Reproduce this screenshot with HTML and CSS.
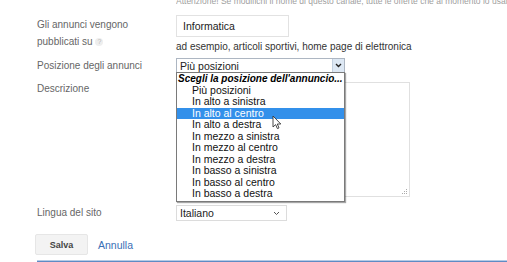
FILE: index.html
```html
<!DOCTYPE html>
<html lang="it">
<head>
    <meta charset="UTF-8">
    <title>Impostazioni canale</title>
    <link rel="stylesheet" href="styles.css">
</head>
<body>
    <div class="notice">Attenzione! Se modifichi il nome di questo canale, tutte le offerte che al momento lo usano come canale verranno aggiornate.</div>

    <!-- argomento -->
    <div class="row row-topic">
        <div class="label">Gli annunci vengono<br>pubblicati su <span class="help">?</span></div>
        <div class="field">
            <div class="text-input">Informatica</div>
            <div class="hint">ad esempio, articoli sportivi, home page di elettronica</div>
        </div>
    </div>

    <!-- posizione -->
    <div class="row row-position">
        <div class="label">Posizione degli annunci</div>
        <div class="field">
            <div class="select select-wide">
                <span>Più posizioni</span>
                <span class="arrow-box">
                    <svg width="7" height="5" viewBox="0 0 7 5"><path d="M1 1 L3.5 3.5 L6 1" fill="none" stroke="#222" stroke-width="1.4"/></svg>
                </span>
            </div>
            <ul class="dropdown">
                <li class="group">Scegli la posizione dell'annuncio...</li>
                <li>Più posizioni</li>
                <li>In alto a sinistra</li>
                <li class="active">In alto al centro</li>
                <li>In alto a destra</li>
                <li>In mezzo a sinistra</li>
                <li>In mezzo al centro</li>
                <li>In mezzo a destra</li>
                <li>In basso a sinistra</li>
                <li>In basso al centro</li>
                <li>In basso a destra</li>
            </ul>
            <svg class="cursor" width="10" height="15" viewBox="0 0 10 15">
                <path d="M1 1 L1 12 L3.6 9.6 L5.4 13.6 L7 12.9 L5.3 9 L8.8 9 Z" fill="#fff" stroke="#333" stroke-width="0.9" stroke-linejoin="round"/>
            </svg>
        </div>
    </div>

    <!-- descrizione -->
    <div class="row row-desc">
        <div class="label">Descrizione</div>
        <div class="field">
            <div class="textarea">
                <svg class="grip" width="7" height="7" viewBox="0 0 7 7">
                    <rect x="5" y="1" width="1" height="1" fill="#aaa"/>
                    <rect x="3" y="3" width="1" height="1" fill="#aaa"/>
                    <rect x="5" y="3" width="1" height="1" fill="#aaa"/>
                    <rect x="1" y="5" width="1" height="1" fill="#aaa"/>
                    <rect x="3" y="5" width="1" height="1" fill="#aaa"/>
                    <rect x="5" y="5" width="1" height="1" fill="#aaa"/>
                </svg>
            </div>
        </div>
    </div>

    <!-- lingua -->
    <div class="row row-lang">
        <div class="label">Lingua del sito</div>
        <div class="field">
            <div class="select select-lang">
                <span>Italiano</span>
                <svg width="7" height="5" viewBox="0 0 7 5"><path d="M1 1 L3.5 3.5 L6 1" fill="none" stroke="#555" stroke-width="1"/></svg>
            </div>
        </div>
    </div>

    <div class="actions">
        <button class="save-btn">Salva</button>
        <a class="cancel-link" href="#">Annulla</a>
    </div>

    <div class="bottom-line"></div>
</body>
</html>
```

FILE: styles.css
```css
body {
    margin: 0;
    padding: 0 0 0 37px;
    font-family: 'Liberation Sans', Arial, sans-serif;
    font-size: 10px;
    color: #222;
    background-color: #fff;
    overflow: hidden;
}

.notice {
    margin: -4px 0 0 139px;
    height: 10px;
    line-height: 10px;
    font-size: 8.5px;
    color: #a0a0a0;
    white-space: nowrap;
    overflow: hidden;
}

.row {
    display: grid;
    grid-template-columns: 139px auto;
}

.label {
    color: #666;
    font-size: 10px;
    line-height: 17px;
}

.help {
    display: inline-block;
    width: 8px;
    height: 8px;
    line-height: 8px;
    border-radius: 50%;
    background-color: #eee;
    color: #bbb;
    font-size: 7px;
    text-align: center;
    vertical-align: middle;
}

.field {
    position: relative;
}

/* argomento */
.row-topic {
    margin-top: 9px;
}

.row-topic .label {
    padding-top: 1px;
}

.text-input {
    width: 113px;
    height: 22px;
    box-sizing: border-box;
    border: 1px solid #e2e2e2;
    padding: 0 6px;
    line-height: 20px;
    font-size: 10.5px;
    color: #222;
}

.hint {
    margin-top: 3px;
    font-size: 10px;
    line-height: 13px;
    color: #333;
}

/* posizione */
.row-position {
    margin-top: 5px;
}

.row-position .label {
    line-height: 15px;
}

.select {
    display: flex;
    align-items: center;
    justify-content: space-between;
    box-sizing: border-box;
    font-size: 10.5px;
    color: #222;
}

.select-wide {
    width: 169px;
    height: 15px;
    border: 1px solid #adb6c2;
    padding-left: 3px;
}

.arrow-box {
    display: flex;
    align-items: center;
    justify-content: center;
    width: 11px;
    height: 13px;
    background-color: #dde8f4;
    border-left: 1px solid #c2d0e0;
}

.dropdown {
    position: absolute;
    top: 14px;
    left: 0;
    z-index: 2;
    width: 169px;
    box-sizing: border-box;
    margin: 0;
    padding: 0 0 1px;
    list-style: none;
    background-color: #fff;
    border: 1px solid #7a7a7a;
    box-shadow: 1px 1px 1px rgba(0, 0, 0, 0.35);
}

.dropdown li {
    height: 11.5px;
    line-height: 11.5px;
    padding-left: 15px;
    font-size: 10.5px;
    color: #111;
    white-space: nowrap;
}

.dropdown li.group {
    padding-left: 1px;
    font-size: 10px;
    font-weight: bold;
    font-style: italic;
    color: #000;
}

.dropdown li.active {
    background-color: #3390ea;
    color: #fff;
}

.cursor {
    position: absolute;
    top: 57px;
    left: 96px;
    z-index: 3;
}

/* descrizione */
.row-desc {
    margin-top: 9px;
}

.row-desc .label {
    margin-top: -2px;
}

.textarea {
    position: relative;
    width: 234px;
    height: 115px;
    box-sizing: border-box;
    border: 1px solid #e0e0e0;
}

.grip {
    position: absolute;
    right: 1px;
    bottom: 1px;
}

/* lingua */
.row-lang {
    margin-top: 8px;
}

.row-lang .label {
    line-height: 16px;
}

.select-lang {
    width: 111px;
    height: 16px;
    border: 1px solid #dcdcdc;
    padding: 0 6px 0 3px;
}

/* pulsanti */
.actions {
    display: flex;
    align-items: center;
    gap: 10px;
    margin-top: 13px;
}

.save-btn {
    width: 53px;
    height: 21px;
    margin-left: -2px;
    background-color: #f3f3f3;
    border: 1px solid #e6e6e6;
    border-radius: 2px;
    font-family: 'Liberation Sans', Arial, sans-serif;
    font-size: 9px;
    font-weight: bold;
    color: #444;
}

.cancel-link {
    font-size: 10.5px;
    color: #3a6fb5;
    text-decoration: none;
}

.bottom-line {
    margin-top: 5px;
    height: 1px;
    background-color: #5f8bc4;
    border-top: 1px solid #b6cbe6;
    border-bottom: 1px solid #b6cbe6;
}
```
